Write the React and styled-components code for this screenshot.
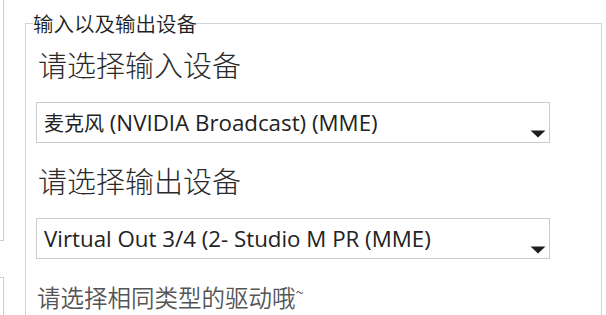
import React from "react";
import styled, { createGlobalStyle } from "styled-components";

const Global = createGlobalStyle`
  html, body { margin: 0; padding: 0; background: #fff; }
  body { font-family: "Open Sans", "Noto Sans CJK SC", sans-serif; }
`;

const Page = styled.div`
  display: flex;
  align-items: flex-start;
  width: 606px;
  height: 315px;
  overflow: hidden;
`;

const Side = styled.div`
  display: flex;
  flex-direction: column;
  width: 4px;
  flex: none;
`;

const SidePanel = styled.div`
  box-sizing: border-box;
  width: 4px;
  height: ${(p) => p.$h}px;
  margin-top: ${(p) => p.$mt || 0}px;
  border-right: 1px solid #cfcfcf;
  border-${(p) => p.$edge}: 1px solid #cfcfcf;
`;

const Fieldset = styled.fieldset`
  box-sizing: border-box;
  margin: 11px 4px 0 21px;
  width: 577px;
  min-height: 330px;
  padding: 0 7px 20px 7px;
  border: 1px solid #d2d2d2;
  min-inline-size: 0;
`;

const Legend = styled.legend`
  padding: 0;
  margin: 0;
  font-family: "Noto Sans CJK SC", sans-serif;
  font-weight: 350;
  font-size: 20.5px;
  line-height: 24px;
  color: #1e1e1e;
`;

const Body = styled.div`
  display: flex;
  flex-direction: column;
  padding-left: 3px;
`;

const Heading = styled.div`
  font-family: "Noto Sans CJK SC", sans-serif;
  font-weight: 300;
  font-size: 29px;
  line-height: 36px;
  color: #2a2a2a;
  padding-left: 2px;
  margin-top: ${(p) => p.$mt}px;
`;

const Select = styled.div`
  box-sizing: border-box;
  display: flex;
  align-items: center;
  justify-content: space-between;
  width: 514px;
  height: 41px;
  margin-top: 20px;
  padding: 0 3px 0 7px;
  border: 1px solid #cccccc;
  background: #fff;
  font-family: "Open Sans", "Noto Sans CJK SC", sans-serif;
  font-size: 22.3px;
  color: #222;
  white-space: nowrap;
`;

const SelectText = styled.span`
  line-height: 30px;
  padding-top: 1px;
`;

const Cjk = styled.span`
  font-family: "Noto Sans CJK SC", sans-serif;
  font-size: 20px;
`;

const Arrow = styled.svg`
  align-self: flex-end;
  margin-bottom: 4px;
  flex: none;
`;

const Hint = styled.div`
  font-family: "Noto Sans CJK SC", sans-serif;
  font-weight: 350;
  font-size: 23.5px;
  line-height: 28px;
  color: #555;
  padding-left: 1px;
  margin-top: 19px;
`;

const Tilde = styled.span`
  font-size: 15px;
  vertical-align: 9px;
`;

const Caret = () => (
  <Arrow width="16" height="8" viewBox="0 0 16 8">
    <path d="M0.5 0.5 H15.5 L8 7.5 Z" fill="#1e1e1e" />
  </Arrow>
);

const DeviceSelect = ({ children }) => (
  <Select>
    <SelectText>{children}</SelectText>
    <Caret />
  </Select>
);

export default function App() {
  return (
    <>
      <Global />
      <Page>
        <Side>
          <SidePanel $h={241} $edge="bottom" />
          <SidePanel $h={60} $mt={36} $edge="top" />
        </Side>
        <Fieldset>
          <Legend>输入以及输出设备</Legend>
          <Body>
            <Heading $mt={11}>请选择输入设备</Heading>
            <DeviceSelect>
              <Cjk>麦克风</Cjk> (NVIDIA Broadcast) (MME)
            </DeviceSelect>
            <Heading $mt={19}>请选择输出设备</Heading>
            <DeviceSelect>Virtual Out 3/4 (2- Studio M PR (MME)</DeviceSelect>
            <Hint>
              请选择相同类型的驱动哦<Tilde>~</Tilde>
            </Hint>
          </Body>
        </Fieldset>
      </Page>
    </>
  );
}
